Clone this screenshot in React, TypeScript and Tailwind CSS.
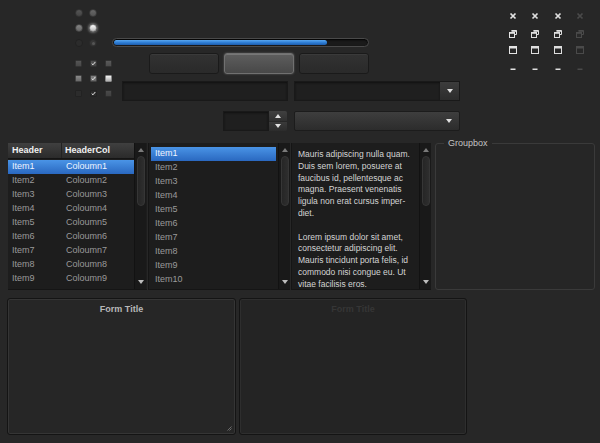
import React from "react";

const Radio = ({ cls, dot }: { cls: string; dot?: string }) => (
  <div className={`w-[8px] h-[8px] rounded-full flex items-center justify-center ${cls}`}>
    {dot ? <div className={`w-[3px] h-[3px] rounded-full ${dot}`} /> : null}
  </div>
);

const Check = ({ cls, checked }: { cls: string; checked?: boolean }) => (
  <div className={`w-[7px] h-[7px] rounded-[1px] flex items-center justify-center ${cls}`}>
    {checked ? (
      <svg width="7" height="7" viewBox="0 0 7 7">
        <path d="M1 3.6 L2.8 5.3 L6 1.4" stroke="#e8e8e8" strokeWidth="1.4" fill="none" />
      </svg>
    ) : null}
  </div>
);

const Tri = ({ up, c = "#e0e0e0" }: { up?: boolean; c?: string }) => (
  <svg width="6" height="4" viewBox="0 0 6 4">
    <path d={up ? "M0 4 L3 0 L6 4 Z" : "M0 0 L6 0 L3 4 Z"} fill={c} />
  </svg>
);

const IconClose = ({ c }: { c: string }) => (
  <svg width="8" height="8" viewBox="0 0 8 8">
    <path d="M1.5 1.5 L6.5 6.5 M6.5 1.5 L1.5 6.5" stroke={c} strokeWidth="1.7" />
  </svg>
);
const IconRestore = ({ c }: { c: string }) => (
  <svg width="8" height="8" viewBox="0 0 8 8">
    <path d="M2.5 0.5 H7.5 V4.5 H6" stroke={c} strokeWidth="1" fill="none" />
    <rect x="2.5" y="0.5" width="5" height="1.3" fill={c} />
    <rect x="0.5" y="2.5" width="5" height="5" stroke={c} strokeWidth="1" fill="#2a2a2a" />
    <rect x="0.5" y="2.5" width="5" height="1.3" fill={c} />
  </svg>
);
const IconMax = ({ c }: { c: string }) => (
  <svg width="8" height="8" viewBox="0 0 8 8">
    <rect x="0.5" y="0.5" width="7" height="7" stroke={c} strokeWidth="1" fill="none" />
    <rect x="0.5" y="0.5" width="7" height="2" fill={c} />
  </svg>
);
const IconMin = ({ c }: { c: string }) => (
  <svg width="8" height="8" viewBox="0 0 8 8">
    <rect x="1.5" y="3.5" width="5" height="1.5" fill={c} />
  </svg>
);

const Scrollbar = () => (
  <div className="w-[12px] h-full bg-[#191919] border-l border-[#121212] flex flex-col items-center">
    <div className="mt-[5px] h-[4px] flex items-center">
      <Tri up c="#7a7a7a" />
    </div>
    <div className="mt-[4px] w-[8px] h-[50px] rounded-full bg-gradient-to-r from-[#262626] to-[#2e2e2e] border border-[#363636]" />
    <div className="mt-auto mb-[5px] h-[4px] flex items-center">
      <Tri c="#bdbdbd" />
    </div>
  </div>
);

const textLines = [
  "Mauris adipiscing nulla quam.",
  "Duis sem lorem, posuere at",
  "faucibus id, pellentesque ac",
  "magna. Praesent venenatis",
  "ligula non erat cursus imper-",
  "diet.",
  "\u00a0",
  "Lorem ipsum dolor sit amet,",
  "consectetur adipiscing elit.",
  "Mauris tincidunt porta felis, id",
  "commodo nisi congue eu. Ut",
  "vitae facilisis eros.",
];

export default function App() {
  const iconCols = ["#e4e4e4", "#dedede", "#dedede", "#4a4a4a"];
  return (
    <div className="w-[600px] h-[443px] bg-[#272727] overflow-hidden font-['Liberation_Sans',Arial,sans-serif] flex flex-col">
      {/* TOP */}
      <div className="h-[143px] flex shrink-0">
        <div className="ml-[75px] w-[37px] flex flex-col">
          <div className="mt-[9px] grid grid-cols-[8px_8px] gap-x-[6px] gap-y-[7px]">
            <Radio cls="bg-gradient-to-b from-[#555] to-[#444] border border-[#333]" />
            <Radio cls="bg-gradient-to-b from-[#686868] to-[#545454] border border-[#3a3a3a]" />
            <Radio cls="bg-gradient-to-b from-[#858585] to-[#666] border border-[#444]" />
            <Radio cls="bg-gradient-to-b from-[#ffffff] to-[#b8b8b8] border border-[#888] shadow-[0_0_3px_#bbb]" />
            <Radio cls="bg-[#2c2c2c] border border-[#222]" />
            <Radio cls="bg-[#363636] border border-[#2a2a2a]" dot="bg-[#555]" />
          </div>
          <div className="mt-[13px] grid grid-cols-[7px_7px_7px] gap-x-[8px] gap-y-[8px]">
            <Check cls="bg-gradient-to-b from-[#555] to-[#474747] border border-[#333]" />
            <Check cls="bg-gradient-to-b from-[#505050] to-[#444] border border-[#333]" checked />
            <Check cls="bg-gradient-to-b from-[#5a5a5a] to-[#4c4c4c] border border-[#333]" />
            <Check cls="bg-gradient-to-b from-[#8a8a8a] to-[#6a6a6a] border border-[#444]" />
            <Check cls="bg-gradient-to-b from-[#808080] to-[#666] border border-[#444]" checked />
            <Check cls="bg-gradient-to-b from-[#f4f4f4] to-[#b0b0b0] border border-[#888]" />
            <Check cls="bg-[#2c2c2c] border border-[#222]" />
            <Check cls="bg-[#2a2a2a] border border-[#222]" checked />
            <Check cls="bg-gradient-to-b from-[#4a4a4a] to-[#404040] border border-[#2e2e2e]" />
          </div>
        </div>

        <div className="w-[360px] flex flex-col">
          {/* progress */}
          <div className="mt-[38px] w-[257px] h-[9px] rounded-full border border-[#4a4a4a] bg-[#1a1a1a] p-[1px] shadow-[inset_0_1px_2px_#000]">
            <div className="w-[213px] h-full rounded-full bg-gradient-to-b from-[#5aa8f0] via-[#2f7fd6] to-[#1d5cab]" />
          </div>
          {/* buttons */}
          <div className="mt-[6px] ml-[37px] flex gap-[5px]">
            <div className="w-[70px] h-[21px] rounded-[3px] border border-[#1a1a1a] bg-gradient-to-b from-[#323232] to-[#2a2a2a] shadow-[inset_0_1px_0_#3a3a3a]" />
            <div className="w-[70px] h-[21px] rounded-[3px] border border-[#707070] bg-gradient-to-b from-[#5e5e5e] to-[#484848] shadow-[0_0_2px_#666,inset_0_1px_0_#777]" />
            <div className="w-[70px] h-[21px] rounded-[3px] border border-[#1a1a1a] bg-gradient-to-b from-[#323232] to-[#2a2a2a] shadow-[inset_0_1px_0_#3a3a3a]" />
          </div>
          {/* inputs */}
          <div className="mt-[7px] ml-[10px] flex gap-[6px]">
            <div className="w-[166px] h-[20px] bg-[#1f1f1f] border border-[#191919] shadow-[inset_0_1px_2px_#111]" />
            <div className="w-[166px] h-[20px] flex border border-[#191919]">
              <div className="flex-1 bg-[#1f1f1f] shadow-[inset_0_1px_2px_#111]" />
              <div className="w-[19px] bg-gradient-to-b from-[#3c3c3c] to-[#2c2c2c] flex items-center justify-center">
                <Tri />
              </div>
            </div>
          </div>
          {/* spin + combo2 */}
          <div className="mt-[10px] ml-[111px] flex">
            <div className="w-[46px] h-[20px] bg-[#1f1f1f] border border-[#191919] shadow-[inset_0_1px_2px_#111]" />
            <div className="w-[18px] h-[20px] flex flex-col gap-[1px]">
              <div className="flex-1 rounded-tr-[2px] bg-gradient-to-b from-[#404040] to-[#303030] flex items-center justify-center">
                <Tri up />
              </div>
              <div className="flex-1 rounded-br-[2px] bg-gradient-to-b from-[#3a3a3a] to-[#2c2c2c] flex items-center justify-center">
                <Tri />
              </div>
            </div>
            <div className="ml-[7px] w-[166px] h-[20px] rounded-[2px] border border-[#1c1c1c] bg-gradient-to-b from-[#3e3e3e] to-[#2c2c2c] flex items-center justify-end pr-[7px]">
              <Tri />
            </div>
          </div>
        </div>

        {/* window icons */}
        <div className="ml-[37px] flex flex-col">
          <div className="mt-[12px] flex gap-[14.4px]">
            {iconCols.map((c, i) => <IconClose key={i} c={c} />)}
          </div>
          <div className="mt-[10px] flex gap-[14.4px]">
            {iconCols.map((c, i) => <IconRestore key={i} c={c} />)}
          </div>
          <div className="mt-[8px] flex gap-[14.4px]">
            {iconCols.map((c, i) => <IconMax key={i} c={c} />)}
          </div>
          <div className="mt-[11px] flex gap-[14.4px]">
            {iconCols.map((c, i) => <IconMin key={i} c={c} />)}
          </div>
        </div>
      </div>

      {/* MIDDLE */}
      <div className="h-[147px] flex pl-[8px] shrink-0">
        {/* table */}
        <div className="w-[139px] h-full flex bg-[#1d1d1d] border-b border-[#151515]">
          <div className="w-[126px] flex flex-col text-[9px]">
            <div className="h-[16px] flex items-center bg-gradient-to-b from-[#404040] to-[#2b2b2b] font-bold text-[#f0f0f0] border-b border-[#151515]">
              <div className="w-[54px] pl-[4px] h-full flex items-center border-r border-[#222]">Header</div>
              <div className="pl-[3px]">HeaderCol</div>
            </div>
            <div className="mt-[1px] flex flex-col">
              {Array.from({ length: 9 }, (_, i) => (
                <div
                  key={i}
                  className={`h-[14px] flex items-center ${
                    i === 0
                      ? "bg-gradient-to-b from-[#4a94e6] to-[#2a68c0] text-[#eef4ff]"
                      : "text-[#9a9a9a]"
                  }`}
                >
                  <div className="w-[54px] pl-[4px]">Item{i + 1}</div>
                  <div className="pl-[4px]">Coloumn{i + 1}</div>
                </div>
              ))}
            </div>
          </div>
          <Scrollbar />
        </div>
        {/* list */}
        <div className="ml-[1px] w-[142px] h-full flex bg-[#1d1d1d] border-b border-l border-[#151515]">
          <div className="w-[130px] pt-[4px] px-[2px] flex flex-col text-[9px]">
            {Array.from({ length: 10 }, (_, i) => (
              <div
                key={i}
                className={`h-[14px] pl-[4px] flex items-center ${
                  i === 0
                    ? "bg-gradient-to-b from-[#4a94e6] to-[#2a68c0] text-[#eef4ff]"
                    : "text-[#9a9a9a]"
                }`}
              >
                Item{i + 1}
              </div>
            ))}
          </div>
          <Scrollbar />
        </div>
        {/* text */}
        <div className="ml-[1px] w-[140px] h-full flex bg-[#1d1d1d] border-b border-l border-[#151515]">
          <div className="w-[128px] pt-[6px] pl-[6px] text-[8.5px] leading-[11.8px] text-[#d4d4d4] overflow-hidden">
            {textLines.map((l, i) => (
              <div key={i} className="whitespace-nowrap">{l}</div>
            ))}
          </div>
          <Scrollbar />
        </div>
        {/* groupbox */}
        <fieldset className="ml-[4px] w-[160px] h-[152px] border border-[#3a3a3a] rounded-[3px] -mt-[5px] bg-[#262626]">
          <legend className="ml-[8px] px-[4px] text-[9px] text-[#c4c4c4] leading-[10px]">Groupbox</legend>
        </fieldset>
      </div>

      {/* FORMS */}
      <div className="mt-[8px] pl-[7px] flex gap-[3px]">
        <div className="w-[229px] h-[137px] rounded-[3px] border border-[#141414] bg-[#262626] shadow-[inset_0_0_0_1px_#353535] flex flex-col">
          <div className="pt-[4px] text-center text-[9px] font-bold text-[#b8b8b8]">Form Title</div>
          <div className="mt-auto mb-[3px] mr-[3px] self-end">
            <svg width="5" height="5" viewBox="0 0 5 5">
              <path d="M4.5 0.5 L0.5 4.5 M4.5 2.5 L2.5 4.5" stroke="#6a6a6a" strokeWidth="1" />
            </svg>
          </div>
        </div>
        <div className="w-[228px] h-[137px] rounded-[3px] border border-[#141414] bg-[#242424] shadow-[inset_0_0_0_1px_#2e2e2e] flex flex-col">
          <div className="pt-[4px] text-center text-[9px] font-bold text-[#363636]">Form Title</div>
        </div>
      </div>
    </div>
  );
}
